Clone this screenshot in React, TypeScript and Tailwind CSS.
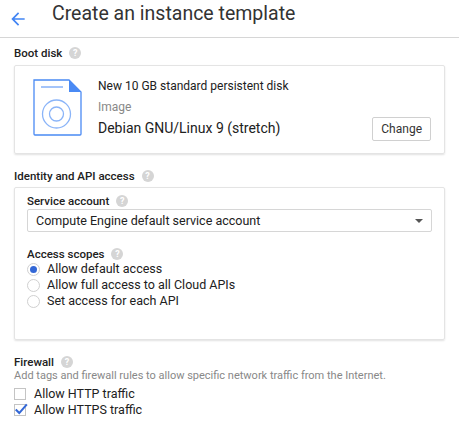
function Help() {
  return (
    <span className="ml-[7px] inline-flex h-[12px] w-[12px] items-center justify-center rounded-full bg-[#d5d5d5] text-[9px] font-bold leading-none text-white">
      ?
    </span>
  );
}

function Radio({ checked, label }: { checked?: boolean; label: string }) {
  return (
    <div className="flex h-[16px] items-center">
      <span className="flex h-[13px] w-[13px] items-center justify-center rounded-full border border-[#d0d0d0] bg-white">
        {checked && <span className="h-[7px] w-[7px] rounded-full bg-[#3367d6]" />}
      </span>
      <span className="ml-[7px] text-[12.5px] leading-[16px] text-[#212121]">{label}</span>
    </div>
  );
}

function Check({ checked, label }: { checked?: boolean; label: string }) {
  return (
    <div className="flex h-[16px] items-center">
      <span className="relative h-[12px] w-[12px] border border-[#c4c4c4] bg-white">
        {checked && (
          <svg viewBox="0 0 12 12" className="absolute left-[-1px] top-[-3px] h-[14px] w-[14px]">
            <path d="M1.5 6.5 L4.5 9.5 L11 2" fill="none" stroke="#3367d6" strokeWidth="1.8" />
          </svg>
        )}
      </span>
      <span className="ml-[8px] text-[12.5px] leading-[16px] text-[#212121]">{label}</span>
    </div>
  );
}

export default function App() {
  return (
    <div className="h-[426px] w-[459px] overflow-hidden bg-white font-[Roboto,Arial,sans-serif] text-[#212121]">
      <div className="flex h-[38px] items-center border-b border-[#d6d6d6]">
        <svg viewBox="0 0 24 24" className="ml-[8px] h-[20px] w-[20px]">
          <path d="M20 11H7.8l5.6-5.6L12 4l-8 8 8 8 1.4-1.4L7.8 13H20z" fill="#4285f4" />
        </svg>
        <h1 className="mb-[10px] ml-[24px] text-[19.5px] font-normal leading-[24px] text-[#333]">Create an instance template</h1>
      </div>

      <div className="px-[14px]">
        <div className="mt-[8px] flex items-center text-[11.5px] font-medium leading-[14px]">Boot disk<Help /></div>
        <div className="mt-[5px] flex h-[89px] rounded-[2px] border border-[#e4e4e4] shadow-[0_1px_2px_rgba(0,0,0,0.12)]">
          <svg viewBox="0 0 49 57" className="ml-[18px] mt-[13px] h-[57px] w-[49px]">
            <path d="M1 1 H36 L48 13 V55 a1 1 0 0 1 -1 1 H2 a1 1 0 0 1 -1 -1 Z" fill="none" stroke="#4a8af4" strokeWidth="1.3" />
            <path d="M36 1 L48 13 H36 Z" fill="#4a8af4" />
            <line x1="8" y1="8" x2="30" y2="8" stroke="#4a8af4" strokeWidth="1" />
            <circle cx="23.5" cy="35" r="14" fill="none" stroke="#8ab4f8" strokeWidth="1.3" />
            <circle cx="23.5" cy="35" r="7" fill="none" stroke="#8ab4f8" strokeWidth="1.3" />
          </svg>
          <div className="ml-[16px] mt-[12px] flex-1 leading-[16px]">
            <div className="text-[12px]">New 10 GB standard persistent disk</div>
            <div className="mt-[5px] text-[12px] text-[#888]">Image</div>
            <div className="mt-[4px] text-[14px] leading-[18px]">Debian GNU/Linux 9 (stretch)</div>
          </div>
          <button className="mb-[12px] mr-[13px] self-end rounded-[2px] border border-[#d0d0d0] px-[8px] py-[3px] text-[12px] leading-[16px] text-[#333]">
            Change
          </button>
        </div>

        <div className="mt-[15px] flex items-center text-[11.5px] font-medium leading-[14px]">Identity and API access<Help /></div>
        <div className="mt-[4px] h-[153px] rounded-[2px] border border-[#e4e4e4] px-[12px] pt-[6px] shadow-[0_1px_2px_rgba(0,0,0,0.12)]">
          <div className="flex items-center text-[11.5px] font-medium leading-[14px]">Service account<Help /></div>
          <div className="mt-[1px] flex h-[23px] items-center justify-between rounded-[2px] border border-[#d6d6d6] px-[8px] text-[12.5px] leading-[16px]">
            Compute Engine default service account
            <span className="h-0 w-0 border-x-[4px] border-t-[4px] border-x-transparent border-t-[#555]" />
          </div>
          <div className="mt-[15px] flex items-center text-[11.5px] font-medium leading-[14px]">Access scopes<Help /></div>
          <Radio checked label="Allow default access" />
          <Radio label="Allow full access to all Cloud APIs" />
          <Radio label="Set access for each API" />
        </div>

        <div className="mt-[15px] flex items-center text-[11.5px] font-medium leading-[14px]">Firewall<Help /></div>
        <div className="text-[11px] leading-[14px] text-[#888]">Add tags and firewall rules to allow specific network traffic from the Internet.</div>
        <div className="mt-[3px]">
          <Check label="Allow HTTP traffic" />
          <Check checked label="Allow HTTPS traffic" />
        </div>
      </div>
    </div>
  );
}
